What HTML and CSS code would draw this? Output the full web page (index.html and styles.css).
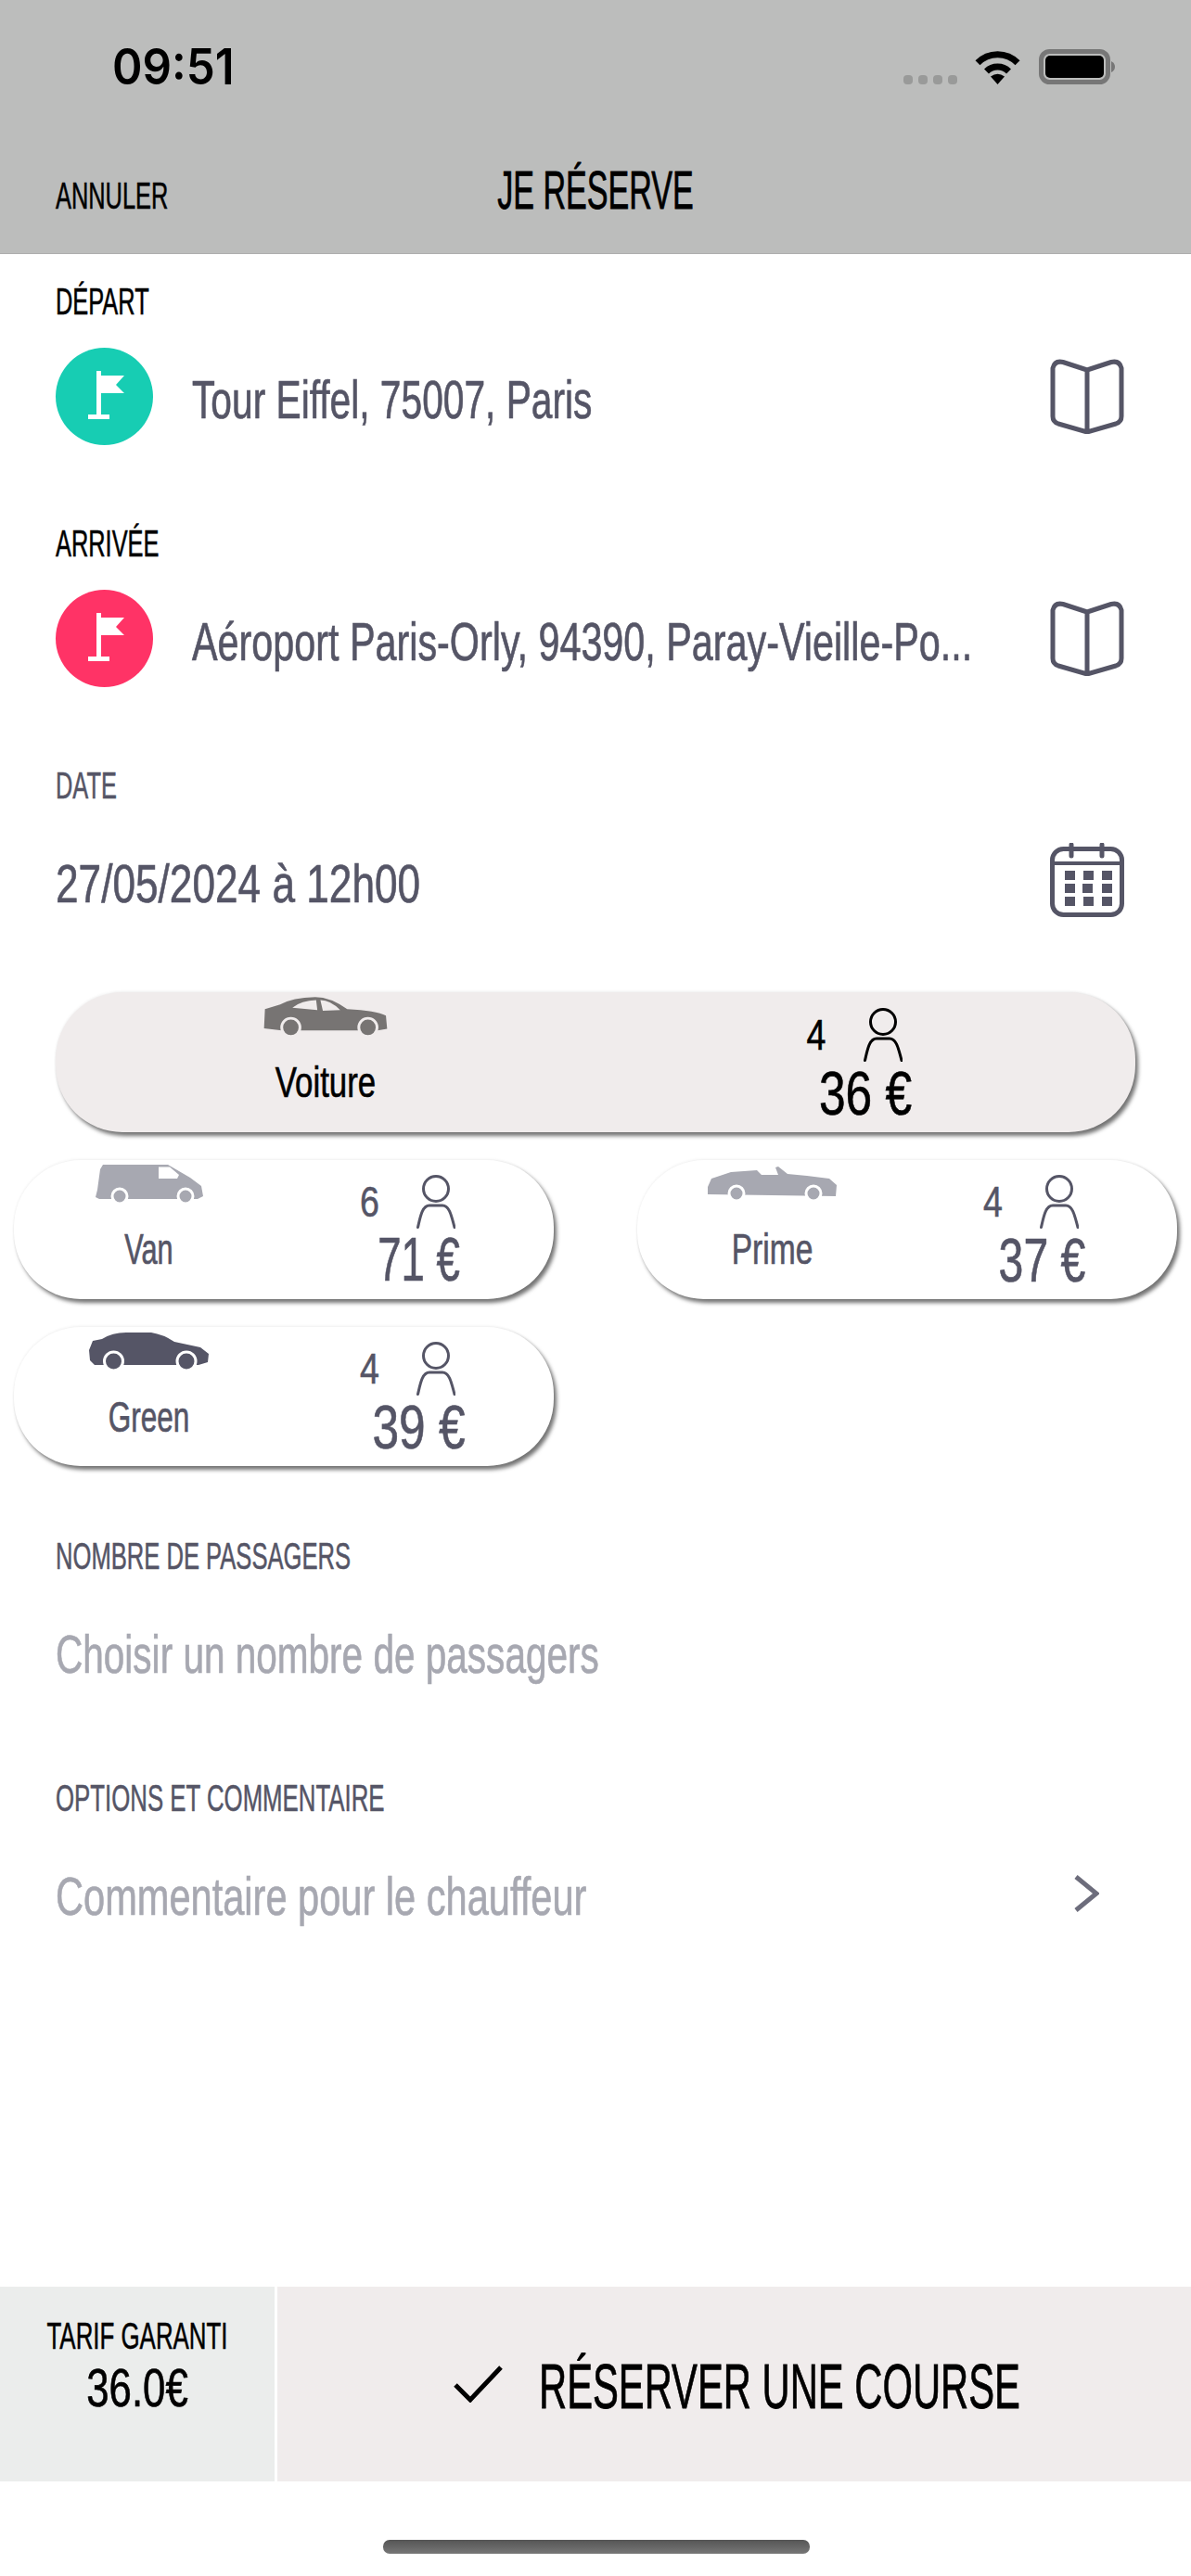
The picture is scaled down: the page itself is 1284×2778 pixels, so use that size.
FILE: index.html
```
<!DOCTYPE html>
<html lang="fr">
<head>
<meta charset="utf-8">
<title>Je réserve</title>
<link rel="stylesheet" href="styles.css">
</head>
<body>
<header class="top">
  <div class="status">
    <span class="time">09:51</span>
    <div class="status-icons">
      <span class="dots"><i></i><i></i><i></i><i></i></span>
      <svg class="wifi" viewBox="0 0 51 38"><path d="M4 14.8A30 30 0 0 1 47 14.8" fill="none" stroke="#000" stroke-width="7"/><path d="M13.5 24A17 17 0 0 1 37.5 24" fill="none" stroke="#000" stroke-width="7"/><path d="M25.5 38L18 29.5Q25.5 24 33 29.5Z"/></svg>
      <svg class="battery" viewBox="0 0 82 38"><rect x="2.5" y="2.5" width="72" height="33" rx="9" fill="none" stroke="#777" stroke-width="5"/><rect x="7" y="7" width="63" height="24" rx="5"/><path d="M78 13Q82 15 82 19Q82 23 78 25Z" fill="#777"/></svg>
    </div>
  </div>
  <nav class="nav">
    <span class="nav-left"><span class="t label sx-caps">ANNULER</span></span>
    <span class="t title sx-title">JE RÉSERVE</span>
    <span></span>
  </nav>
</header>

<main class="main">
  <section class="field">
    <div class="t label sx-caps">DÉPART</div>
    <div class="row row-gap">
      <span class="pin pin-green"><svg viewBox="0 0 105 105"><path d="M44 25h5v5h25l-9 10 9 9H49v23h9v5H35v-5h9z" fill="#fff"/></svg></span>
      <span class="t value sx-tour">Tour Eiffel, 75007, Paris</span>
      <svg class="side-icon" viewBox="0 0 80 81"><path d="M40 12L14 3.5Q5 1.5 3 10V62Q3 68 9 70L40 79L71 70Q77 68 77 62V10Q75 1.5 66 3.5ZM40 12V79" fill="none" stroke="#555566" stroke-width="5" stroke-linejoin="round"/></svg>
    </div>
  </section>

  <section class="field">
    <div class="t label sx-caps">ARRIVÉE</div>
    <div class="row row-gap">
      <span class="pin pin-red"><svg viewBox="0 0 105 105"><path d="M44 25h5v5h25l-9 10 9 9H49v23h9v5H35v-5h9z" fill="#fff"/></svg></span>
      <span class="t value sx-airport">Aéroport Paris-Orly, 94390, Paray-Vieille-Po...</span>
      <svg class="side-icon" viewBox="0 0 80 81"><path d="M40 12L14 3.5Q5 1.5 3 10V62Q3 68 9 70L40 79L71 70Q77 68 77 62V10Q75 1.5 66 3.5ZM40 12V79" fill="none" stroke="#555566" stroke-width="5" stroke-linejoin="round"/></svg>
    </div>
  </section>

  <section class="field">
    <div class="t label muted sx-caps">DATE</div>
    <div class="row">
      <span class="t value sx-date">27/05/2024 à 12h00</span>
      <svg class="side-icon cal" viewBox="0 0 80 80"><rect x="2.5" y="6.5" width="75" height="71" rx="12" fill="none" stroke="#555566" stroke-width="5"/><path d="M0 20h80v4H0z" fill="#555566"/><path d="M23 2v12M56 2v12" stroke="#555566" stroke-width="5" stroke-linecap="round"/><path d="M16 30h11v10H16zM36 30h11v10H36zM56 30h11v10H56zM16 44h11v10H16zM35 44h11v10H35zM56 44h11v10H56zM16 58h11v10H16zM36 58h11v10H36zM56 58h11v10H56z" fill="#555566"/></svg>
    </div>
  </section>

  <section class="cards">
    <article class="card card-main">
      <div class="card-left">
        <svg class="car car-sedan" viewBox="70 42 408 130"><path d="M75 85L125 70Q165 46 240 45Q290 45 345 85Q440 90 472 106L476 150L445 155H130L72 148Z" fill="#777473"/><path d="M165 80Q195 56 243 55L247 88ZM257 55Q290 55 322 88L265 90Z" fill="#f0ecec"/><circle cx="160" cy="145" r="30" fill="#777473" stroke="#f0ecec" stroke-width="9"/><circle cx="413" cy="145" r="30" fill="#777473" stroke="#f0ecec" stroke-width="9"/></svg>
        <span class="t name sx-voiture">Voiture</span>
      </div>
      <div class="card-right">
        <div class="seats"><span class="t num sx-num">4</span><svg class="person person-dark" viewBox="0 0 42 58"><circle cx="21" cy="15" r="13.5"/><path d="M1.5 56.5C4 46 6 33 14 33H28C36 33 38 46 41 56.5"/></svg></div>
        <span class="t price sx-p36">36 €</span>
      </div>
    </article>

    <article class="card">
      <div class="card-left">
        <svg class="car car-van" viewBox="0 0 116 43"><path d="M8 0H78L102 14L114 23L116 34L110 37H4L0 35L2 27L5 5Z" fill="#a7a8b1"/><path d="M68 2.5H80L90 11L88 15H68Z" fill="#fff"/><circle cx="26" cy="34" r="8" fill="#a7a8b1" stroke="#fff" stroke-width="3"/><circle cx="97" cy="34" r="8" fill="#a7a8b1" stroke="#fff" stroke-width="3"/></svg>
        <span class="t name sx-van">Van</span>
      </div>
      <div class="card-right">
        <div class="seats"><span class="t num sx-num">6</span><svg class="person" viewBox="0 0 42 58"><circle cx="21" cy="15" r="13.5"/><path d="M1.5 56.5C4 46 6 33 14 33H28C36 33 38 46 41 56.5"/></svg></div>
        <span class="t price sx-p71">71 €</span>
      </div>
    </article>

    <article class="card">
      <div class="card-left">
        <svg class="car car-prime" viewBox="0 0 139 38"><path d="M0 22L4 13L25 6L53 4L58 9L76 9L73 1L76 0L86 8L107 10L131 13L139 20L138 32L0 30Z" fill="#a7a8b1"/><circle cx="31" cy="29" r="8" fill="#a7a8b1" stroke="#fff" stroke-width="3"/><circle cx="114" cy="29" r="8" fill="#a7a8b1" stroke="#fff" stroke-width="3"/></svg>
        <span class="t name sx-prime">Prime</span>
      </div>
      <div class="card-right">
        <div class="seats"><span class="t num sx-num">4</span><svg class="person" viewBox="0 0 42 58"><circle cx="21" cy="15" r="13.5"/><path d="M1.5 56.5C4 46 6 33 14 33H28C36 33 38 46 41 56.5"/></svg></div>
        <span class="t price sx-p37">37 €</span>
      </div>
    </article>

    <article class="card">
      <div class="card-left">
        <svg class="car car-green" viewBox="0 0 130 42"><path d="M0 20L4 10L14 8Q25 1 40 1H67Q80 3 92 11L120 17L129 24L128 33L118 36H6L1 31Z" fill="#555566"/><circle cx="26.5" cy="32" r="10" fill="#555566" stroke="#fff" stroke-width="3"/><circle cx="105" cy="32" r="10" fill="#555566" stroke="#fff" stroke-width="3"/></svg>
        <span class="t name sx-green">Green</span>
      </div>
      <div class="card-right">
        <div class="seats"><span class="t num sx-num">4</span><svg class="person" viewBox="0 0 42 58"><circle cx="21" cy="15" r="13.5"/><path d="M1.5 56.5C4 46 6 33 14 33H28C36 33 38 46 41 56.5"/></svg></div>
        <span class="t price sx-p36">39 €</span>
      </div>
    </article>
  </section>

  <section class="field field-passengers">
    <div class="t label muted sx-nombre">NOMBRE DE PASSAGERS</div>
    <div class="row">
      <span class="t value placeholder sx-choisir">Choisir un nombre de passagers</span>
    </div>
  </section>

  <section class="field">
    <div class="t label muted sx-options">OPTIONS ET COMMENTAIRE</div>
    <div class="row">
      <span class="t value placeholder sx-comment">Commentaire pour le chauffeur</span>
      <svg class="chevron" viewBox="0 0 28 42"><path d="M3 3L25 21L3 39" fill="none" stroke="#6d6d7c" stroke-width="5"/></svg>
    </div>
  </section>
</main>

<footer class="foot">
  <div class="tarif">
    <span class="t tarif-label sx-tarif-label">TARIF GARANTI</span>
    <span class="t tarif-price sx-tarif">36.0€</span>
  </div>
  <button class="book" type="button">
    <svg class="check" viewBox="0 0 53 40"><path d="M2 21L18 37L51 2" fill="none" stroke="#000" stroke-width="5"/></svg>
    <span class="t book-text sx-book">RÉSERVER UNE COURSE</span>
  </button>
</footer>
<div class="home"><span class="home-bar"></span></div>
</body>
</html>
```
FILE: styles.css
```
* { box-sizing: border-box; }
html, body { margin: 0; padding: 0; }
body {
  width: 1284px;
  height: 2778px;
  background: #fff;
  color: #000;
  font-family: "Liberation Sans", sans-serif;
  display: flex;
  flex-direction: column;
  overflow: hidden;
}

/* Condensed type: set at the narrowed size, then stretched to the full cap height. */
.t {
  display: inline-block;
  white-space: nowrap;
  font-size: calc(var(--fs) * var(--sx));
  transform: scaleY(calc(1 / var(--sx)));
  transform-origin: center center;
  -webkit-text-stroke: .5px currentColor;
}
.sx-caps { --sx: .635; }
.sx-nombre { --sx: .64; }
.sx-options { --sx: .645; }
.sx-title { --sx: .588; }
.sx-tour { --sx: .702; }
.sx-airport { --sx: .7125; }
.sx-choisir { --sx: .699; }
.sx-date { --sx: .762; }
.sx-comment { --sx: .717; }
.sx-voiture { --sx: .757; }
.sx-van { --sx: .667; }
.sx-green { --sx: .685; }
.sx-prime { --sx: .73; }
.sx-num { --sx: .8; }
.sx-p36 { --sx: .78; }
.sx-p71 { --sx: .69; }
.sx-p37 { --sx: .73; }
.sx-tarif-label { --sx: .647; }
.sx-tarif { --sx: .754; }
.sx-book { --sx: .614; }

.top {
  height: 274px;
  background: #bcbdbc;
  border-bottom: 1px solid #aeaeae;
  flex: none;
}
.status {
  height: 170px;
  padding: 44px 82px 0 121px;
  display: flex;
  justify-content: space-between;
  align-items: flex-start;
}
.time {
  font-family: Inter, "Liberation Sans", sans-serif;
  font-weight: 600;
  font-size: 53px;
  line-height: 56px;
  display: inline-block;
  transform: scaleX(.93);
  transform-origin: left center;
}
.status-icons { display: flex; align-items: flex-end; padding-top: 9px; }
.dots { display: flex; gap: 6px; margin-right: 18px; }
.dots i { width: 10px; height: 10px; border-radius: 4px; background: #999a99; display: block; }
.wifi { width: 51px; height: 38px; margin-right: 19px; }
.battery { width: 82px; height: 38px; }
.nav {
  display: grid;
  grid-template-columns: 1fr auto 1fr;
  align-items: start;
}
.nav-left { padding: 21px 0 0 60px; }
.title { --fs: 58px; line-height: 70px; }
.label { --fs: 40px; line-height: 40px; display: block; width: max-content; -webkit-text-stroke-width: .35px; }
.nav-left .label { display: inline-block; }
.muted { color: #555566; }

.main { flex: 1; display: flex; flex-direction: column; }
.field { padding: 0 72px 0 60px; margin-bottom: 86px; }
.field:first-child { margin-top: 31px; }
.row { display: flex; align-items: center; height: 105px; margin-top: 30px; }
.row-gap { gap: 42px; }
.pin { width: 105px; height: 105px; border-radius: 50%; flex: none; display: block; }
.pin svg { display: block; width: 105px; height: 105px; }
.pin-green { background: #17cdb3; }
.pin-red { background: #ff3366; }
.value { --fs: 58px; line-height: 70px; margin-top: 7px; color: #555566; margin-right: auto; }
.placeholder { color: #a7a8b1; }
.side-icon { width: 80px; height: 81px; flex: none; }
.cal { height: 80px; margin-top: -2px; }
.chevron { width: 28px; height: 42px; flex: none; margin-right: 27px; }

.cards {
  display: grid;
  grid-template-columns: 582px 582px;
  column-gap: 90px;
  row-gap: 30px;
  padding: 0 15px;
  margin-top: -18px;
  margin-bottom: 77px;
}
.card {
  height: 150px;
  border-radius: 72px;
  background: #fff;
  display: grid;
  grid-template-columns: 1fr 1fr;
  box-shadow: 3px 4px 4px rgba(0, 0, 0, .55), 0 -1px 3px rgba(0, 0, 0, .06);
}
.card-main {
  grid-column: 1 / -1;
  width: 1164px;
  height: 151px;
  margin-left: 45px;
  background: #f0ecec;
}
.card-left, .card-right {
  display: flex;
  flex-direction: column;
  align-items: center;
  min-width: 0;
}
.car { display: block; flex: none; }
.car-sedan { width: 134px; height: 43px; margin-top: 4px; }
.car-van { width: 116px; height: 43px; margin-top: 5px; }
.car-prime { width: 139px; height: 38px; margin-top: 7px; }
.car-green { width: 130px; height: 42px; margin-top: 5px; }
.name { --fs: 46px; line-height: 46px; color: #555566; margin-top: 27px; }
.car-van + .name { margin-top: 26px; }
.car-prime + .name { margin-top: 29px; }
.card-main .name { color: #000; }
.card-main .num, .card-main .price { color: #000; }
.seats { display: flex; align-items: center; gap: 42px; padding-right: 24px; margin-top: 16px; height: 58px; flex: none; }
.card-main .seats { margin-top: 17px; }
.num { --fs: 47px; line-height: 47px; width: 19px; color: #555566; }
.person { width: 42px; height: 58px; flex: none; display: block; fill: none; stroke: #555566; stroke-width: 3; stroke-linecap: round; }
.person-dark { stroke: #000; }
.price { --fs: 66px; line-height: 66px; color: #555566; margin-top: 1px; }

.foot { height: 210px; display: flex; flex: none; }
.tarif {
  width: 296px;
  background: #ebedec;
  display: flex;
  flex-direction: column;
  align-items: center;
  padding-top: 30px;
}
.tarif-label { --fs: 40px; line-height: 46px; -webkit-text-stroke-width: .35px; }
.tarif-price { --fs: 58px; line-height: 66px; }
.book {
  flex: 1;
  margin: 0 0 0 3px;
  padding: 0 0 0 190px;
  border: 0;
  background: #f0ecec;
  display: flex;
  align-items: center;
  font-family: inherit;
  color: #000;
  text-align: left;
}
.check { width: 53px; height: 40px; flex: none; margin-right: 39px; }
.book-text { --fs: 68px; line-height: 80px; margin-top: 5px; }
.home { height: 102px; flex: none; padding: 63px 0 0 413px; }
.home-bar { display: block; width: 460px; height: 15px; border-radius: 7px; background: linear-gradient(#555, #777); }
```
